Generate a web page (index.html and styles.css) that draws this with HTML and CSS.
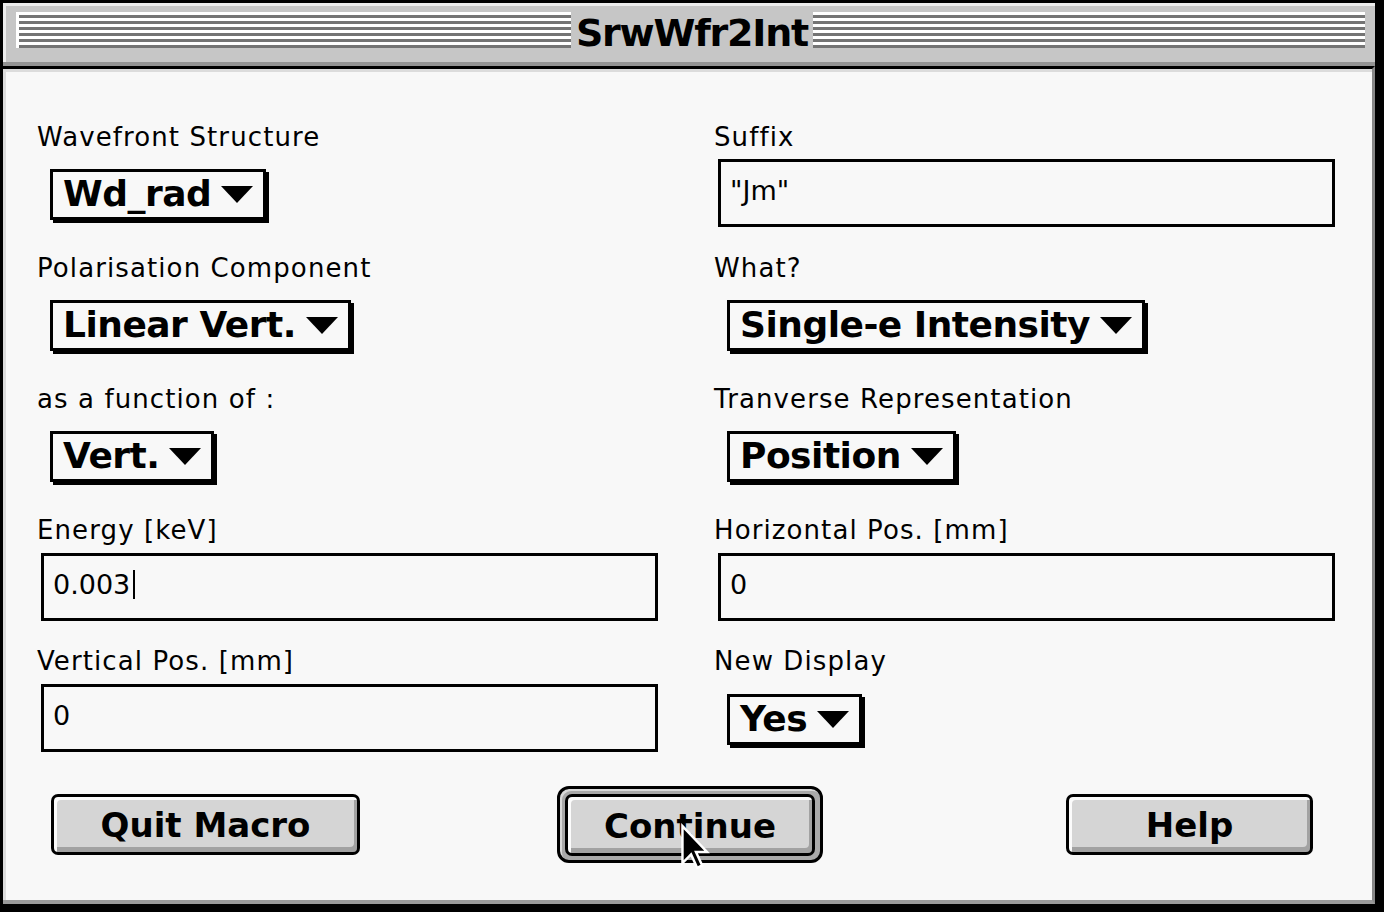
FILE: index.html
```html
<!DOCTYPE html>
<html>
<head>
<meta charset="utf-8">
<title>SrwWfr2Int</title>
<link rel="stylesheet" href="styles.css">
</head>
<body>
<div class="window">
  <div class="titlebar">
    <div class="stripes"></div>
    <div class="title">SrwWfr2Int</div>
    <div class="stripes right"></div>
  </div>
  <div class="content">
    <div class="form">
      <div class="field">
        <div class="label">Wavefront Structure</div>
        <div class="popup"><span class="ptext">Wd_rad</span><svg class="tri" width="32" height="17" viewBox="0 0 32 17"><polygon points="0,0 32,0 16,17" fill="#000"/></svg></div>
      </div>
      <div class="field">
        <div class="label">Suffix</div>
        <div class="input">"Jm"</div>
      </div>
      <div class="field">
        <div class="label">Polarisation Component</div>
        <div class="popup"><span class="ptext">Linear Vert.</span><svg class="tri" width="32" height="17" viewBox="0 0 32 17"><polygon points="0,0 32,0 16,17" fill="#000"/></svg></div>
      </div>
      <div class="field">
        <div class="label">What?</div>
        <div class="popup"><span class="ptext">Single-e Intensity</span><svg class="tri" width="32" height="17" viewBox="0 0 32 17"><polygon points="0,0 32,0 16,17" fill="#000"/></svg></div>
      </div>
      <div class="field">
        <div class="label">as a function of :</div>
        <div class="popup"><span class="ptext">Vert.</span><svg class="tri" width="32" height="17" viewBox="0 0 32 17"><polygon points="0,0 32,0 16,17" fill="#000"/></svg></div>
      </div>
      <div class="field">
        <div class="label">Tranverse Representation</div>
        <div class="popup"><span class="ptext">Position</span><svg class="tri" width="32" height="17" viewBox="0 0 32 17"><polygon points="0,0 32,0 16,17" fill="#000"/></svg></div>
      </div>
      <div class="field">
        <div class="label">Energy [keV]</div>
        <div class="input input-low"><span>0.003</span><span class="caret"></span></div>
      </div>
      <div class="field">
        <div class="label">Horizontal Pos. [mm]</div>
        <div class="input input-low">0</div>
      </div>
      <div class="field">
        <div class="label">Vertical Pos. [mm]</div>
        <div class="input input-low">0</div>
      </div>
      <div class="field">
        <div class="label">New Display</div>
        <div class="popup popup-low"><span class="ptext">Yes</span><svg class="tri" width="32" height="17" viewBox="0 0 32 17"><polygon points="0,0 32,0 16,17" fill="#000"/></svg></div>
      </div>
    </div>
    <div class="buttons">
      <div class="btn quit">Quit Macro</div>
      <div class="default-ring">
        <div class="btn cont">Continue</div>
        <svg class="cursor" width="32" height="48" viewBox="0 0 13 19"><polygon points="1,1 1,16 4.5,12.5 7,18 9,17 6.5,11.5 11,11.5" fill="#000" stroke="#fff" stroke-width="1"/></svg>
      </div>
      <div class="btn help">Help</div>
    </div>
  </div>
</div>
</body>
</html>
```
FILE: styles.css
```css
html, body {
  margin: 0;
  padding: 0;
}
body {
  background: #000;
  width: 1384px;
  height: 912px;
  overflow: hidden;
  padding: 3px 0 0 3px;
  box-sizing: border-box;
}
.window {
  width: 1372px;
  height: 901px;
  display: flex;
  flex-direction: column;
}
.titlebar {
  height: 59px;
  background: #c6c6c6;
  border-bottom: 4px solid #939393;
  box-shadow: inset 3px 3px 0 #ececec;
  display: flex;
  align-items: flex-start;
  padding: 0 10px 0 13px;
}
.stripes {
  flex: 1;
  height: 36px;
  margin-top: 9px;
  border-left: 3px solid #fff;
  background: repeating-linear-gradient(to bottom, #fff 0, #fff 3px, #747474 3px, #747474 6px);
}
.stripes.right {
  border-left: none;
}
.title {
  width: 242px;
  text-align: center;
  font-family: "DejaVu Sans", sans-serif;
  font-weight: bold;
  font-size: 38px;
  line-height: 61px;
  color: #000;
  letter-spacing: -1.2px;
}
.content {
  flex: 1;
  background: #f8f8f8;
  border-top: 3px solid #000;
  border-right: 3px solid #888;
  border-bottom: 4px solid #999;
  box-shadow: inset 3px 3px 0 #dcdcdc;
  padding: 53px 0 0 34px;
  position: relative;
}
.form {
  display: grid;
  grid-template-columns: 677px 640px;
  grid-auto-rows: 131px;
}
.field {
  display: flex;
  flex-direction: column;
  align-items: flex-start;
}
.label {
  font-family: "DejaVu Sans", sans-serif;
  font-size: 26px;
  line-height: 30px;
  letter-spacing: 1.1px;
  color: #000;
  height: 30px;
}
.input {
  margin-top: 7px;
  margin-left: 4px;
  border: 3px solid #000;
  background: #f8f8f8;
  font-family: "DejaVu Sans", sans-serif;
  font-size: 27px;
  line-height: 33px;
  padding: 12px 0 0 9px;
  box-sizing: content-box;
  width: 602px;
  height: 50px;
  display: flex;
  align-items: flex-start;
}
.input-low {
  margin-top: 8px;
}
.caret {
  display: inline-block;
  width: 2px;
  height: 29px;
  background: #000;
  margin-left: 3px;
  margin-top: 2px;
}
.popup {
  margin-top: 17px;
  margin-left: 13px;
  display: inline-flex;
  align-items: center;
  height: 45px;
  border: 3px solid #000;
  background: #f8f8f8;
  box-shadow: 3px 3px 0 #000;
  padding: 0 10px 0 10px;
}
.popup-low {
  margin-top: 18px;
}
.ptext {
  font-family: "DejaVu Sans", sans-serif;
  font-weight: bold;
  font-size: 36px;
  line-height: 45px;
  margin-top: -3px;
  letter-spacing: -0.5px;
}
.tri {
  margin-left: 10px;
  display: block;
}
.buttons {
  display: flex;
  align-items: center;
  margin-top: 7px;
  height: 80px;
  padding-left: 14px;
}
.btn {
  font-family: "DejaVu Sans", sans-serif;
  font-weight: bold;
  font-size: 34px;
  height: 55px;
  line-height: 57px;
  text-align: center;
  border: 3px solid #000;
  border-radius: 7px;
  background: #d5d5d5;
  box-shadow: inset 3px 3px 0 #fbfbfb, inset -3px -5px 0 #a2a2a2;
  color: #000;
  box-sizing: content-box;
}
.quit {
  width: 303px;
}
.default-ring {
  margin-left: 197px;
  border: 3px solid #000;
  border-radius: 12px;
  background: #a9a9a9;
  box-shadow: inset 2px 2px 0 #d9d9d9;
  padding: 5px 5px 4px 5px;
  position: relative;
}
.cont {
  width: 244px;
  height: 56px;
  line-height: 58px;
}
.cursor {
  position: absolute;
  left: 120px;
  top: 34px;
}
.help {
  margin-left: 243px;
  width: 241px;
}
```
